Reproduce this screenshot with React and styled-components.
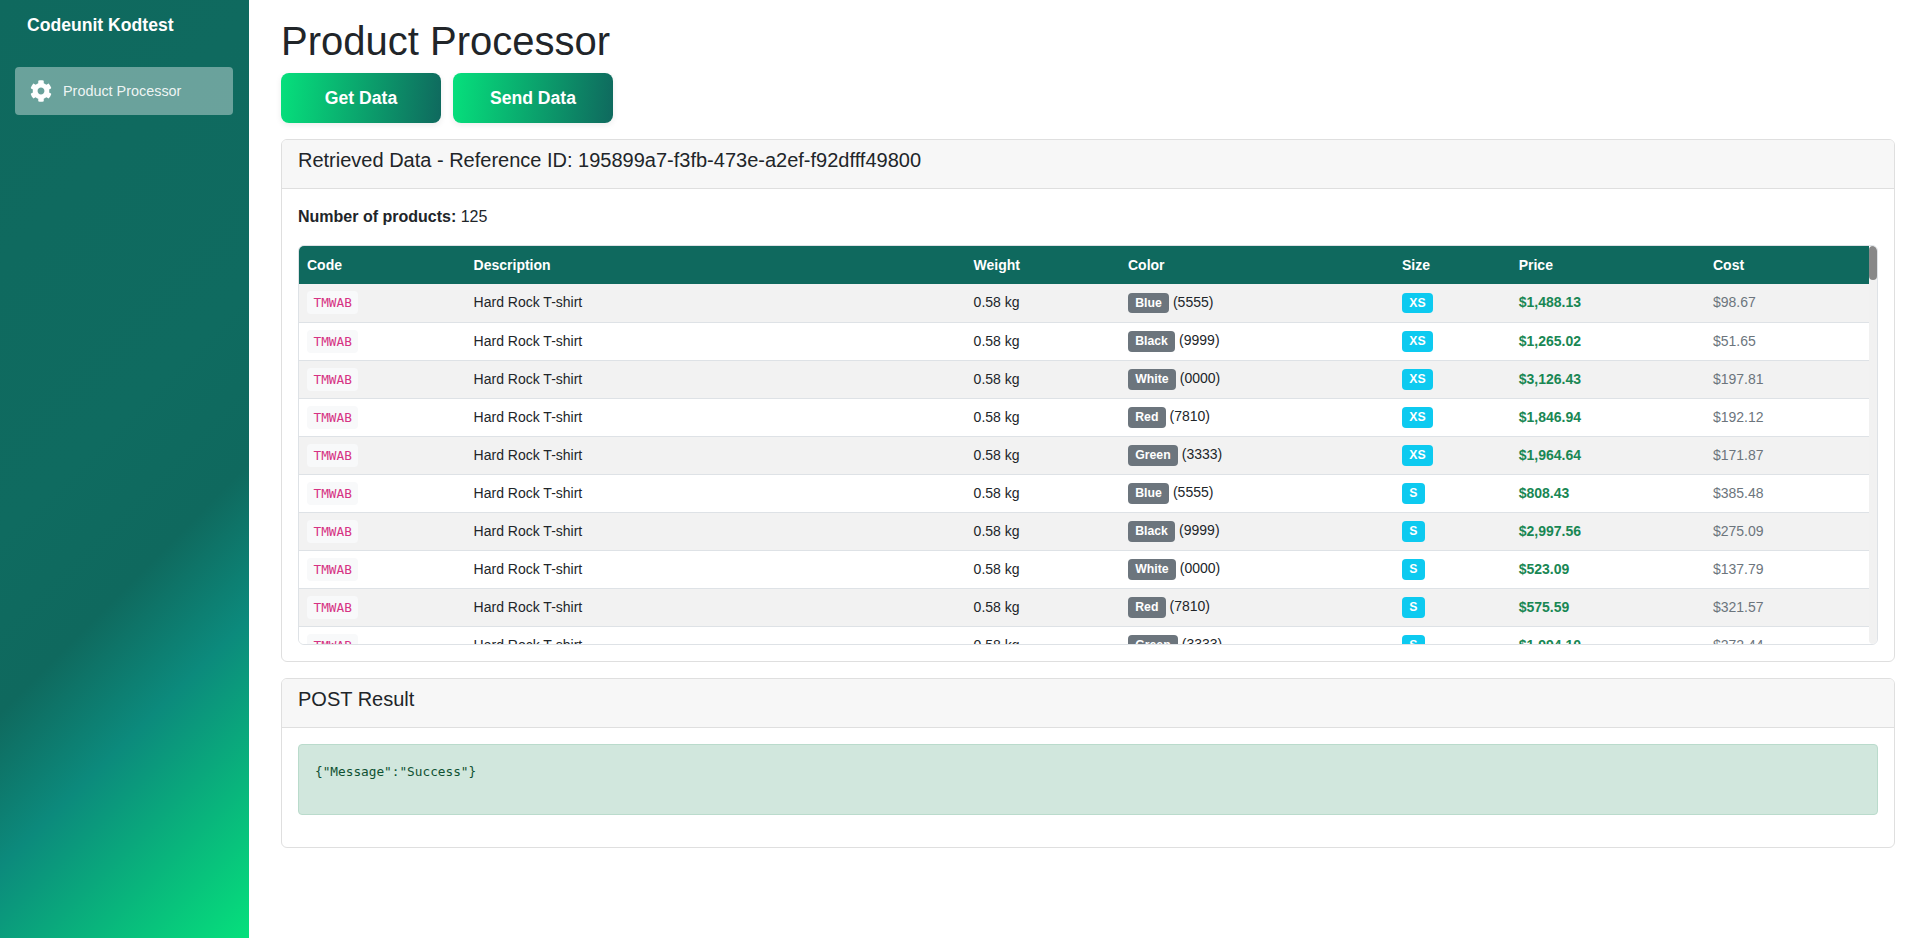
import React from 'react';
import styled, { createGlobalStyle } from 'styled-components';
import { FaCog } from 'react-icons/fa';

const Global = createGlobalStyle`
  * { box-sizing: border-box; }
  html, body { margin: 0; height: 100%; }
  body { font-family: "Liberation Sans", Arial, sans-serif; font-size: 16px; line-height: 1.5; color: #212529; background: #fff; }
`;
const Layout = styled.div`display: flex; min-height: 938px;`;
const Sidebar = styled.aside`
  flex: 0 0 249px; height: 938px; padding: 0 16px 0 15px;
  background: linear-gradient(135deg, #0f695e 0%, #0f6b60 45%, #0f695e 60%, #0c8a7c 73%, #06e07c 100%);
  color: #fff;
`;
const Brand = styled.div`font-size: 17.6px; font-weight: 700; line-height: 26px; padding: 12px 0 0 12px; height: 67px;`;
const NavItem = styled.a`
  display: flex; align-items: center; height: 48px; padding: 0 16px 0 15px; gap: 11px; border-radius: 4px;
  background: rgba(255,255,255,0.38); color: rgba(255,255,255,0.9); font-size: 14.4px;
  svg { flex: none; color: #fff; }
`;
const NavLabel = styled.span`padding-top: 2px;`;
const Main = styled.main`flex: 1; min-width: 0; padding: 17px 18px 0 32px;`;
const Title = styled.h1`font-size: 40px; font-weight: 400; line-height: 48px; margin: 0 0 8px;`;
const Actions = styled.div`display: flex; gap: 12px; margin-bottom: 16px;`;
const GradientButton = styled.button`
  width: 160px; height: 50px; border: 0; border-radius: 8px; color: #fff; font: 700 17.6px "Liberation Sans", Arial, sans-serif;
  background: linear-gradient(95deg, #06e07c 0%, #0f695e 100%); box-shadow: 0 2px 6px rgba(0,0,0,0.08);
`;
const Card = styled.section`border: 1px solid #dfdfdf; border-radius: 6px; margin-bottom: 16px; background: #fff;`;
const CardHeader = styled.h5`
  margin: 0; height: 49px; padding: 8px 16px; font-size: 20px; font-weight: 400; line-height: 24px;
  background: #f7f7f7; border-bottom: 1px solid #dfdfdf; border-radius: 5px 5px 0 0;
`;
const CardBody = styled.div`padding: 16px;`;
const Count = styled.p`margin: 0 0 16px; font-size: 16px; line-height: 24px;`;
const TableFrame = styled.div`
  position: relative; height: 400px; padding-right: 8px; border: 1px solid #dee2e6; border-radius: 6px; overflow: hidden;
`;
const TableScroll = styled.div`height: 100%; overflow: hidden;`;
const ScrollTrack = styled.div`position: absolute; top: 0; right: 0; bottom: 0; width: 8px; background: #f1f1f1; border-radius: 4px;`;
const ScrollThumb = styled.div`width: 8px; height: 34px; background: #888; border-radius: 4px;`;
const Table = styled.table`width: 100%; border-collapse: collapse; font-size: 14px; table-layout: fixed;`;
const Th = styled.th`
  position: sticky; top: 0; z-index: 1; background: #0f695e; color: #fff; font-size: 14px; font-weight: 700; text-align: left;
  height: 38px; padding: 0 8px; width: ${p => p.$w ? `${p.$w}px` : 'auto'};
`;
const Tr = styled.tr`background: ${p => p.$odd ? '#f2f2f2' : '#fff'};`;
const Td = styled.td`height: 38px; padding: 0 8px; border-bottom: 1px solid #dee2e6; line-height: 21px; white-space: nowrap;`;
const Code = styled.code`
  display: inline-block; font-family: "DejaVu Sans Mono", monospace; font-size: 12.75px; line-height: 21px; color: #d63384; background: #f8f9fa;
  padding: 1px 6.5px; border-radius: 4px;
`;
const Badge = styled.span`
  display: inline-block; padding: 4px 7.25px; border-radius: 4px; font-size: 12.25px; font-weight: 700; line-height: 12.25px; color: #fff;
  background: ${p => p.$bg};
`;
const Price = styled.span`font-weight: 700; color: #198754;`;
const Cost = styled.span`color: #6c757d;`;
const Alert = styled.pre`
  margin: 0 0 16px; height: 71px; padding: 16px; border: 1px solid #badbcc; border-radius: 4px; background: #d1e7dd; color: #0f5132;
  font-family: "DejaVu Sans Mono", monospace; font-size: 12.75px; line-height: 21px;
`;

const colors = [['Blue', '5555'], ['Black', '9999'], ['White', '0000'], ['Red', '7810'], ['Green', '3333']];
const sizes = ['XS', 'S', 'M', 'L', 'XL'];
const prices = [[1488.13, 98.67], [1265.02, 51.65], [3126.43, 197.81], [1846.94, 192.12], [1964.64, 171.87], [808.43, 385.48], [2997.56, 275.09], [523.09, 137.79], [575.59, 321.57], [1994.10, 272.44]];
const money = n => '$' + n.toLocaleString('en-US', { minimumFractionDigits: 2, maximumFractionDigits: 2 });
const rows = prices.map(([price, cost], i) => {
  const [name, code] = colors[i % 5];
  return { name, code, size: sizes[Math.floor(i / 5)], price, cost };
});
const heads = [['Code', 166.6], ['Description', 500], ['Weight', 154.4], ['Color', 274], ['Size', 116.7], ['Price', 194.3], ['Cost', 0]];

export default function App() {
  return (
    <Layout>
      <Global />
      <Sidebar>
        <Brand>Codeunit Kodtest</Brand>
        <NavItem><FaCog size={22} /><NavLabel>Product Processor</NavLabel></NavItem>
      </Sidebar>
      <Main>
        <Title>Product Processor</Title>
        <Actions>
          <GradientButton>Get Data</GradientButton>
          <GradientButton>Send Data</GradientButton>
        </Actions>
        <Card>
          <CardHeader>Retrieved Data - Reference ID: 195899a7-f3fb-473e-a2ef-f92dfff49800</CardHeader>
          <CardBody>
            <Count><strong>Number of products:</strong> 125</Count>
            <TableFrame>
              <TableScroll>
                <Table>
                  <thead>
                    <tr>{heads.map(([h, w]) => <Th key={h} $w={w}>{h}</Th>)}</tr>
                  </thead>
                  <tbody>
                    {rows.map((r, i) => (
                      <Tr key={i} $odd={i % 2 === 0}>
                        <Td><Code>TMWAB</Code></Td>
                        <Td>Hard Rock T-shirt</Td>
                        <Td>0.58 kg</Td>
                        <Td><Badge $bg="#6c757d">{r.name}</Badge> ({r.code})</Td>
                        <Td><Badge $bg="#0dcaf0">{r.size}</Badge></Td>
                        <Td><Price>{money(r.price)}</Price></Td>
                        <Td><Cost>{money(r.cost)}</Cost></Td>
                      </Tr>
                    ))}
                  </tbody>
                </Table>
              </TableScroll>
              <ScrollTrack><ScrollThumb /></ScrollTrack>
            </TableFrame>
          </CardBody>
        </Card>
        <Card>
          <CardHeader>POST Result</CardHeader>
          <CardBody>
            <Alert>{'{"Message":"Success"}'}</Alert>
          </CardBody>
        </Card>
      </Main>
    </Layout>
  );
}
